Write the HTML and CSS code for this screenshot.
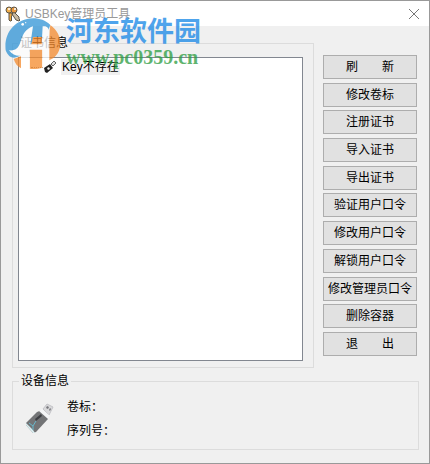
FILE: index.html
```html
<!DOCTYPE html>
<html lang="zh-CN">
<head>
    <meta charset="UTF-8">
    <meta name="viewport" content="width=device-width, initial-scale=1.0">
    <title>USBKey管理员工具</title>
    <link rel="stylesheet" href="styles.css">
</head>
<body>
    <div class="window">
        <header class="titlebar">
            <svg class="app-icon" width="16" height="16" viewBox="0 0 16 16">
                <g stroke="#5d5548" stroke-width="1">
                    <path d="M9 6l5 5v2l1 1-1 1-3-1-4-6z" fill="#c9b9a0"/>
                    <path d="M4 7h3v3l-1 1 1 1-1 1 1 1-1 1H5l-1-1z" fill="#f0a83c"/>
                    <circle cx="4" cy="4" r="3" fill="#f2b04c"/>
                    <circle cx="9" cy="4" r="3" fill="#e8963c"/>
                </g>
                <circle cx="4" cy="3" r="1" fill="#fff"/>
                <circle cx="10" cy="3" r="1" fill="#fff"/>
            </svg>
            <h1>USBKey管理员工具</h1>
            <button class="close" aria-label="关闭">
                <svg width="10" height="10" viewBox="0 0 10 10"><path d="M0 0L10 10M10 0L0 10" stroke="#777"/></svg>
            </button>
        </header>

        <div class="main">
            <fieldset class="group certs">
                <legend>证书信息</legend>
                <ul class="tree">
                    <li>
                        <span class="branch"></span>
                        <svg class="key-icon" width="14" height="14" viewBox="0 0 14 14">
                            <path d="M1 8L7 4l3 4-6 5-2-1z" fill="#222"/>
                            <path d="M4 8l2-1 1 2-2 1z" fill="#eee"/>
                            <path d="M8 4l3-3 2 2-3 3z" fill="#ddd" stroke="#666"/>
                        </svg>
                        <span class="node">Key不存在</span>
                    </li>
                </ul>
            </fieldset>
            <div class="actions">
                <button>刷&emsp;&emsp;新</button>
                <button>修改卷标</button>
                <button>注册证书</button>
                <button>导入证书</button>
                <button>导出证书</button>
                <button>验证用户口令</button>
                <button>修改用户口令</button>
                <button>解锁用户口令</button>
                <button>修改管理员口令</button>
                <button>删除容器</button>
                <button>退&emsp;&emsp;出</button>
            </div>
        </div>

        <fieldset class="group device">
            <legend>设备信息</legend>
            <div class="device-row">
                <svg width="30" height="32" viewBox="0 0 30 32">
                    <path d="M18 6L22 1l6 3-4 8z" fill="#d8d8da" stroke="#c4c4c8"/>
                    <path d="M22 3l2 1-1 2-2-1zM25 5l1 1-1 2-1-1z" fill="#77777c"/>
                    <path d="M1 20L12 9l5-2 6 5v4L11 29l-3 1L1 22z" fill="#737476"/>
                    <path d="M14 8l3-2 7 6-1 4z" fill="#f4f5f6"/>
                    <path d="M1 20v2l7 8h2l-2-3z" fill="#d9edf0"/>
                    <path d="M10 16l6-5 1 2-6 5z" fill="#3c3e42"/>
                    <path d="M4 20l4 3 3-5M8 23v4" fill="none" stroke="#68b8cc" stroke-width="1"/>
                </svg>
                <div class="device-info">
                    <p>卷标：</p>
                    <p>序列号：</p>
                </div>
            </div>
        </fieldset>

        <div class="watermark">
            <svg width="56" height="52" viewBox="0 0 168 156">
                <path d="M2 100C-4 48 30 6 84 4c20 0 38 6 52 20L108 92 50 112C34 126 12 128 2 100z" fill="#2f93d6"/>
                <path d="M136 24c22 16 32 38 30 62-4 24-16 36-34 44V60zM26 126l22-8v36C36 148 30 138 26 126zM74 92h38v60c-12 4-26 5-38 3zM84 60h30v24H78z" fill="#f58a2c"/>
                <path d="M84 28C62 36 54 50 46 76c-6 18-14 26-34 24 10 14 24 18 36 16v38c8 3 18 3 26 1V98h38v54c8-3 15-6 21-10V50c0-16-6-24-20-22l-3 54H76z" fill="#fff"/>
                <circle cx="53" cy="22" r="4" fill="#fff"/>
                <circle cx="62" cy="17" r="2" fill="#fff"/>
            </svg>
            <div class="watermark-text">
                <span class="site-name">河东软件园</span>
                <span class="site-url">www.pc0359.cn</span>
            </div>
        </div>
    </div>
</body>
</html>
```
FILE: styles.css
```css
* {
    box-sizing: border-box;
}
body {
    margin: 0;
    background-color: #f0f0f0;
    color: #000;
    font-family: "Liberation Sans", "Noto Sans CJK SC", sans-serif;
    font-size: 12px;
    line-height: 16px;
}
.window {
    position: relative;
    min-height: 100vh;
    border: 1px solid #999;
    background-color: #f0f0f0;
}
.titlebar {
    display: flex;
    align-items: center;
    height: 25px;
    padding: 0 10px 0 4px;
    background-color: #fff;
}
.titlebar h1 {
    flex: 1;
    margin: 0 0 0 4px;
    font-size: 12px;
    font-weight: normal;
    color: #999;
}
.close {
    display: flex;
    padding: 0;
    border: none;
    background: none;
}
.main {
    display: flex;
    gap: 9px;
    padding: 8px 12px 0 11px;
}
.group {
    min-width: 0;
    margin: 0;
    border: 1px solid #dcdcdc;
}
.group legend {
    height: 18px;
    padding: 0 2px;
    line-height: 18px;
}
.certs {
    flex: 1;
    padding: 5px 10px 6px 5px;
}
.tree {
    height: 304px;
    margin: 0;
    padding: 1px 12px;
    list-style: none;
    border: 1px solid #828790;
    background-color: #fff;
}
.tree li {
    display: flex;
    align-items: center;
}
.branch {
    width: 12px;
    border-top: 1px dotted #888;
}
.node {
    margin-left: 4px;
    padding: 0 1px;
    background-color: #f0f0f0;
}
.actions {
    display: flex;
    flex-direction: column;
    justify-content: space-between;
    width: 94px;
    padding: 21px 0 12px;
}
.actions button {
    height: 24px;
    padding: 0;
    border: 1px solid #adadad;
    background-color: #e1e1e1;
    color: #000;
    font: inherit;
    white-space: nowrap;
}
.device {
    margin: 4px 10px 12px 11px;
    padding: 5px 6px 6px;
}
.device-row {
    display: flex;
    align-items: center;
    gap: 12px;
    padding-left: 6px;
}
.device-info p {
    margin: 0;
    line-height: 24px;
}
.watermark {
    position: absolute;
    top: 16px;
    left: 4px;
    display: flex;
    gap: 5px;
    opacity: 0.75;
    pointer-events: none;
}
.watermark-text {
    display: flex;
    flex-direction: column;
}
.site-name {
    font-family: "Noto Sans CJK SC", sans-serif;
    font-size: 27px;
    font-weight: bold;
    line-height: 26px;
    color: #1486e6;
}
.site-url {
    font-family: "Liberation Serif", serif;
    font-size: 20px;
    font-weight: bold;
    line-height: 28px;
    color: #2a9c40;
}
```
